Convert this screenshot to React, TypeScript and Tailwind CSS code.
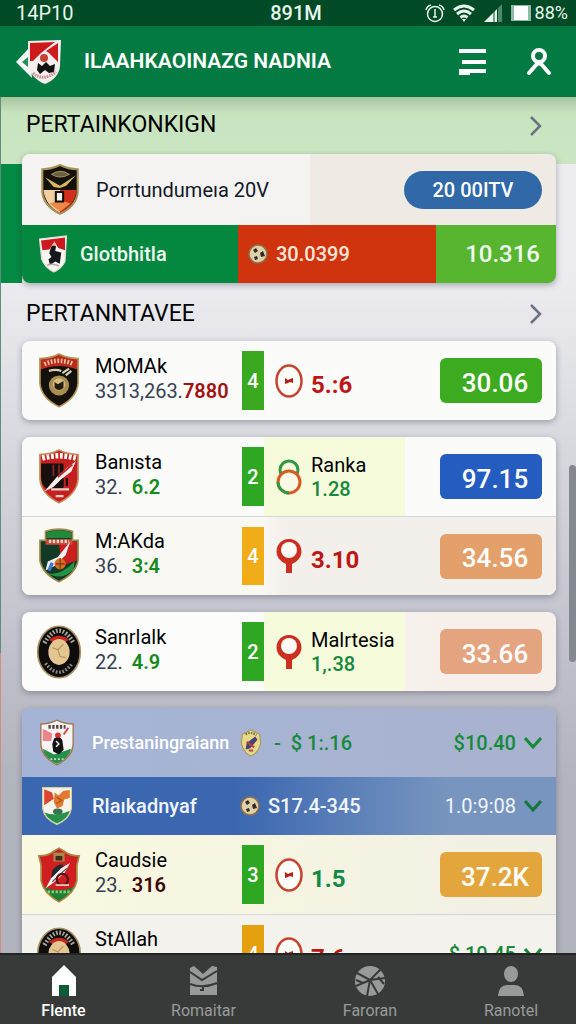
import type { ReactNode } from "react"
import clsx from "clsx"

type CrestKind =
    | "gold"
    | "kick"
    | "black"
    | "red"
    | "green"
    | "round"
    | "white"
    | "flag"
    | "crimson"

const SHIELD = "M3 5Q12 5 20 1Q28 5 37 5V27Q36 40 20 48Q4 40 3 27Z"

function Crest({ kind, className }: { kind: CrestKind; className?: string }) {
    return (
        <svg viewBox="0 0 40 50" className={clsx("shrink-0", className)} aria-hidden="true">
            {kind === "gold" && (
                <>
                    <path d={SHIELD} fill="#15110d" />
                    <path d="M4 25H20V47Q6 40 4 25Z" fill="#f3cfa0" />
                    <path d="M20 25H36Q35 39 20 47Z" fill="#cf2f1c" />
                    <path d="M10 38Q20 33 30 38L20 46Z" fill="#ef8a46" />
                    <path d="M16 27H23V36H16Z" fill="#f6f2ea" stroke="#15110d" strokeWidth="2" />
                    <path d="M12 10Q20 4 29 10Q20 15 12 10Z" fill="#6d6040" stroke="#a08f5c" strokeWidth="1" />
                    <path d="M6 13L20 21L35 11L26 21L20 23L14 22Z" fill="#d5b763" />
                    <path d={SHIELD} fill="none" stroke="#a8935a" strokeWidth="2" />
                </>
            )}
            {kind === "kick" && (
                <>
                    <path d="M2 5L38 1L36 35Q31 45 21 49Q9 43 5 32Z" fill="#f7f4f2" />
                    <path d="M4 7L36 3V20L27 17L22 9L15 19L6 20Z" fill="#cb1a1d" />
                    <path d="M17 17Q21 9 24 15L23 21L31 23L29 38L23 35L16 40L14 32L18 29L15 24Z" fill="#17181a" />
                    <path d="M18 14L22 8L25 14Z" fill="#f3b8a8" />
                    <path d="M12 40Q20 37 28 41" stroke="#b7a9a6" strokeWidth="2" fill="none" />
                    <path d="M2 5L38 1L36 35Q31 45 21 49Q9 43 5 32Z" fill="none" stroke="#e4ded6" strokeWidth="1.5" />
                </>
            )}
            {kind === "black" && (
                <>
                    <path d={SHIELD} fill="#14100d" />
                    <path d="M3 5Q12 5 20 1Q28 5 37 5V15Q20 8 3 15Z" fill="#bb2b1d" />
                    <path d="M7 10Q20 4 33 10" stroke="#e7c5a0" strokeWidth="4" strokeDasharray="1.5 1.5" fill="none" />
                    <path d="M11 16Q17 14 22 16M23 18L29 14M26 20L31 16" stroke="#d9cfae" strokeWidth="2" fill="none" />
                    <circle cx="20" cy="29" r="9" fill="#a88d4f" />
                    <circle cx="20" cy="28" r="5.5" fill="#d4bd7f" />
                    <path d="M16 26L19 28L24 25V31Q20 35 16 31Z" fill="#241b12" />
                    <path d={SHIELD} fill="none" stroke="#b39452" strokeWidth="1.5" />
                </>
            )}
            {kind === "red" && (
                <>
                    <path d={SHIELD} fill="#c4201f" />
                    <path d="M4 13H24V35H9Q4 33 4 24Z" fill="#17100f" />
                    <path d="M5 8Q20 4 35 8" stroke="#fff" strokeWidth="5" strokeDasharray="2.5 1.5" fill="none" />
                    <path d="M15 14V24M20 14V22" stroke="#8b2a26" strokeWidth="1.5" />
                    <path d="M7 38L18 25L27 17L35 11L31 20L22 27L15 34Z" fill="#f8efee" />
                    <path d="M19 25L32 14" stroke="#c4201f" strokeWidth="1.5" />
                    <path d="M13 36H29M17 42H24" stroke="#eacdc9" strokeWidth="2" />
                    <path d="M23 27V33M27 26V33" stroke="#17100f" strokeWidth="2" />
                    <path d={SHIELD} fill="none" stroke="#c78a5a" strokeWidth="1.5" />
                </>
            )}
            {kind === "green" && (
                <>
                    <path d="M8 3Q20 -1 32 3V11H37V29Q35 41 20 48Q5 41 3 29V11H8Z" fill="#123a24" />
                    <path d="M20 12H36V29L22 34Z" fill="#c9201f" />
                    <path d="M9 4Q20 0 31 4V9H9Z" fill="#23893a" />
                    <path d="M8 10H32V15H8Z" fill="#cf4a38" />
                    <path d="M11 12H29" stroke="#f0ddcf" strokeWidth="3" strokeDasharray="2 1.5" />
                    <path d="M30 12L19 26L10 30L8 38L16 34L26 24Z" fill="#eef0f3" />
                    <path d="M14 31L11 38" stroke="#4a74c9" strokeWidth="3" />
                    <circle cx="21" cy="32" r="5" fill="#d56d25" />
                    <path d="M17 32H25M21 27V37" stroke="#7b3410" strokeWidth="1" />
                    <path d="M9 40Q20 44 34 30L33 37Q22 48 9 40Z" fill="#239447" />
                    <path d="M8 3Q20 -1 32 3V11H37V29Q35 41 20 48Q5 41 3 29V11H8Z" fill="none" stroke="#a08b4d" strokeWidth="1.5" />
                </>
            )}
            {kind === "round" && (
                <>
                    <ellipse cx="20" cy="25" rx="19" ry="23" fill="#0e0d0c" stroke="#a5915d" strokeWidth="1.5" />
                    <path d="M7 17Q20 -5 33 17" stroke="#a9a79f" strokeWidth="4" strokeDasharray="1.5 1.5" fill="none" />
                    <path d="M8 35Q20 51 32 35" stroke="#8e8c84" strokeWidth="3" strokeDasharray="1.5 1.5" fill="none" />
                    <path d="M11 14Q20 7 29 14L26 16H14Z" fill="#c4281d" />
                    <ellipse cx="20" cy="25" rx="9.5" ry="11.5" fill="#e3c691" />
                    <path d="M14 21L19 23L24 18M19 23L21 29L26 30" stroke="#b8945a" strokeWidth="1" fill="none" />
                </>
            )}
            {kind === "white" && (
                <>
                    <path d={SHIELD} fill="#f7f6f3" />
                    <path d="M5 10L15 15L14 23H5Z" fill="#ec8590" />
                    <path d="M5 31L17 37L35 31Q33 41 20 47Q6 41 5 31Z" fill="#24904a" />
                    <path d="M11 8H29" stroke="#5b4545" strokeWidth="4" strokeDasharray="2.5 1.5" />
                    <path d="M32 9L27 16" stroke="#d5434a" strokeWidth="2" />
                    <circle cx="21" cy="17" r="3" fill="#d7332f" />
                    <path d="M17 20Q26 17 26 25L27 32L22 37L16 34L15 26Z" fill="#141414" />
                    <path d="M19 23L22 26L19 29" stroke="#fff" strokeWidth="1.5" fill="none" />
                    <path d="M13 42H27" stroke="#b9dfc3" strokeWidth="2" strokeDasharray="2 2" />
                    <path d={SHIELD} fill="none" stroke="#a07a55" strokeWidth="1.5" />
                </>
            )}
            {kind === "flag" && (
                <>
                    <path d="M2 2H38V28Q36 41 20 48Q4 41 2 28Z" fill="#f7f4ec" />
                    <path d="M4 4L14 8L16 16L4 24Z" fill="#dc4630" />
                    <path d="M36 5L28 6L22 12L17 8L16 20L20 28L27 25L29 17L36 15Z" fill="#e3792f" />
                    <path d="M20 14L26 18L19 22" stroke="#a9501c" strokeWidth="1.5" fill="none" />
                    <ellipse cx="21" cy="32" rx="6" ry="4" fill="#3b7150" />
                    <path d="M4 33Q20 39 36 31Q34 41 20 47Q7 41 4 33Z" fill="#27914a" />
                    <path d="M2 2H38V28Q36 41 20 48Q4 41 2 28Z" fill="none" stroke="#d8cf9e" strokeWidth="1.5" />
                </>
            )}
            {kind === "crimson" && (
                <>
                    <path d="M2 8Q10 8 15 4L20 1L25 4Q30 8 38 8L36 16V30Q34 41 20 49Q6 41 4 30V16Z" fill="#d01f20" />
                    <path d="M6 35Q20 42 34 35Q31 43 20 48Q9 43 6 35Z" fill="#1e7e32" />
                    <path d="M10 40H30" stroke="#8fd07f" strokeWidth="2.5" strokeDasharray="2 1.5" />
                    <path d="M15 5H25V13H15Z" fill="#a8884b" />
                    <path d="M17 8H23V12H17Z" fill="#4b261a" />
                    <path d="M14 21Q19 14 24 16L18 29L12 33Z" fill="#24282f" />
                    <path d="M30 14L25 23L15 32L8 37L13 28L22 19Z" fill="#f4f2f2" />
                    <path d="M14 31L27 19" stroke="#555a64" strokeWidth="1" />
                    <circle cx="23" cy="29" r="5" fill="none" stroke="#5a1415" strokeWidth="2" />
                    <path d="M17 34H29" stroke="#f1d3d0" strokeWidth="1.5" />
                    <path d="M2 8Q10 8 15 4L20 1L25 4Q30 8 38 8L36 16V30Q34 41 20 49Q6 41 4 30V16Z" fill="none" stroke="#a98946" strokeWidth="1.5" />
                </>
            )}
        </svg>
    )
}

function Ball() {
    return (
        <svg viewBox="0 0 20 20" className="h-5 w-5 shrink-0" aria-hidden="true">
            <circle cx="10" cy="10" r="9" fill="#dfd0a9" stroke="#8b7048" strokeWidth="1.5" />
            <path d="M5 6L8 4L10 7L7 9Z M12 9L15 7L17 12L13 13Z M6 13L9 12L10 15L7 16Z" fill="#332c22" />
        </svg>
    )
}

function MiniBadge() {
    return (
        <svg viewBox="0 0 20 26" className="h-[28px] w-[22px] shrink-0" aria-hidden="true">
            <path d="M10 1L18 5L19 13Q17 22 10 25Q3 22 1 13L2 5Z" fill="#e5d98c" stroke="#a8974f" strokeWidth="1" />
            <path d="M5 5Q10 2 15 6" stroke="#7d6d42" strokeWidth="2" strokeDasharray="1.5 1" fill="none" />
            <path d="M14 7L16 10L9 18L5 19L6 13Z" fill="#4a3f76" />
            <path d="M6 12L13 17M8 20H12" stroke="#b5443a" strokeWidth="2" />
        </svg>
    )
}

function DownArrow({ className }: { className?: string }) {
    return (
        <svg viewBox="0 0 18 14" className={clsx("h-[14px] w-[18px]", className)} aria-hidden="true">
            <path d="M1 2L9 11L17 2" fill="none" stroke="currentColor" strokeWidth="3" />
        </svg>
    )
}

type MarkKind = "ring" | "rings" | "pin"

function Mark({ kind }: { kind: MarkKind }) {
    return (
        <svg viewBox="0 0 28 36" className="h-9 w-7 shrink-0" aria-hidden="true">
            {kind === "ring" && (
                <>
                    <ellipse cx="14" cy="18" rx="12.5" ry="15.5" fill="#fffdf8" stroke="#c5432f" strokeWidth="2.5" />
                    <path d="M10 15L13 17L15 16L18 15V20L15 19L13 20L10 21Z" fill="#b3201a" />
                </>
            )}
            {kind === "rings" && (
                <>
                    <circle cx="14" cy="11" r="9" fill="none" stroke="#2f9a41" strokeWidth="3" />
                    <circle cx="14" cy="23" r="11" fill="#fbf8e6" stroke="#d65b22" strokeWidth="3" />
                    <path d="M3 23A11 11 0 0 0 14 34" fill="none" stroke="#2f9a41" strokeWidth="3" />
                </>
            )}
            {kind === "pin" && (
                <>
                    <path d="M14 1A12 13 0 0 1 26.500 14Q26 22 17 26V35H11V26Q2 22 1.500 14A12 13 0 0 1 14 1Z" fill="#cb2f20" />
                    <circle cx="14" cy="12" r="8" fill="#fdf9f4" />
                </>
            )}
        </svg>
    )
}

interface TeamRowProps {
    crest: CrestKind
    name: string
    prefix: string
    score: string
    scoreClass: string
    rank: string
    rankClass: string
    mark: MarkKind
    rival?: string
    value: string
    valueClass?: string
    odds: string
    oddsClass?: string
    className?: string
}

function TeamRow({
    crest,
    name,
    prefix,
    score,
    scoreClass,
    rank,
    rankClass,
    mark,
    rival,
    value,
    valueClass,
    odds,
    oddsClass,
    className
}: TeamRowProps) {
    return (
        <div
            className={clsx(
                "grid min-h-[79px] grid-cols-[73px_minmax(0,147fr)_22px_minmax(0,141fr)_minmax(0,151fr)] items-stretch",
                className
            )}
        >
            <div className="flex items-center justify-center">
                <Crest kind={crest} className="h-14 w-12" />
            </div>
            <div className="flex flex-col justify-center pb-1 text-xl leading-[25px] whitespace-nowrap">
                <p className="text-black">{name}</p>
                <p className="text-gray-700">
                    {prefix}
                    <span className={clsx("font-semibold", scoreClass)}>{score}</span>
                </p>
            </div>
            <div className={clsx("my-[10px] flex items-center justify-center text-xl font-medium text-white", rankClass)}>
                {rank}
            </div>
            <div className={clsx("flex items-center gap-2 pl-[11px] whitespace-nowrap", rival && "bg-[#f6fbdc]")}>
                <Mark kind={mark} />
                {rival ? (
                    <div className="text-xl leading-6">
                        <p className="text-black">{rival}</p>
                        <p className="font-medium text-[#168a3c]">{value}</p>
                    </div>
                ) : (
                    <p className={clsx("pt-2 text-2xl font-bold", valueClass)}>{value}</p>
                )}
            </div>
            <div className="flex items-center justify-end pr-[14px]">
                {oddsClass ? (
                    <button
                        type="button"
                        className={clsx("h-[45px] w-[102px] rounded-md pt-1 pl-2 text-[26px] leading-none font-medium text-white", oddsClass)}
                    >
                        {odds}
                    </button>
                ) : (
                    <button type="button" className="flex items-center gap-2 text-xl font-medium text-[#168a3c]">
                        {odds}
                        <DownArrow />
                    </button>
                )}
            </div>
        </div>
    )
}

function Card({ children, className }: { children: ReactNode; className?: string }) {
    return (
        <div className={clsx("overflow-hidden rounded-lg shadow-[0_2px_6px_rgba(60,60,80,0.4)]", className)}>
            {children}
        </div>
    )
}

function SectionTitle({ children, className }: { children: string; className?: string }) {
    return (
        <a href="#" className={clsx("flex items-center justify-between pr-[14px] pl-1 text-[23px] text-black", className)}>
            <h2>{children}</h2>
            <svg viewBox="0 0 14 20" className="h-5 w-[14px] text-gray-500" aria-hidden="true">
                <path d="M3 1L12 10L3 19" fill="none" stroke="currentColor" strokeWidth="2.5" />
            </svg>
        </a>
    )
}

function StatusBar() {
    return (
        <div className="grid h-[26px] shrink-0 grid-cols-3 items-center bg-[#004a26] pr-2 pl-4 text-xl leading-none text-[#e8f6ec]">
            <span>14P10</span>
            <span className="pl-2 text-center font-medium">891M</span>
            <span className="flex items-center justify-end gap-2">
                <svg viewBox="0 0 20 20" className="h-5 w-5" fill="none" stroke="currentColor" strokeWidth="1.5" aria-hidden="true">
                    <circle cx="10" cy="11" r="7.5" />
                    <path d="M10 6V14M8 14H12M1 7Q2 3 6 2M19 7Q18 3 14 2" />
                </svg>
                <svg viewBox="0 0 22 18" className="h-[18px] w-[22px]" fill="none" stroke="currentColor" strokeWidth="3" aria-hidden="true">
                    <path d="M1 6Q11 -2 21 6M4 10Q11 4 18 10M7.500 13.500Q11 10.500 14.500 13.500" />
                    <path d="M9 15H13L11 18Z" fill="currentColor" stroke="none" />
                </svg>
                <svg viewBox="0 0 20 18" className="h-[18px] w-5" aria-hidden="true">
                    <path d="M1 18L14 5V18Z" fill="currentColor" />
                    <path d="M15 4L19 0V18H15Z" fill="#4d8a69" />
                    <path d="M11 7V18" stroke="#004a26" />
                </svg>
                <svg viewBox="0 0 20 18" className="h-[18px] w-5" aria-hidden="true">
                    <path d="M0 1H20V17H0Z" fill="#93b8a4" />
                    <path d="M3 2H17V16H3Z" fill="#fff" />
                </svg>
                <span className="-ml-1 text-lg leading-none">88%</span>
            </span>
        </div>
    )
}

function Header() {
    return (
        <header className="flex h-[71px] shrink-0 items-center bg-[#037a41] pr-6 pl-4 text-white">
            <button type="button" aria-label="Back" className="mr-5">
                <svg viewBox="0 0 48 46" className="h-12 w-12" aria-hidden="true">
                    <path d="M0 23L13 9L16 39Z" fill="#f3faf6" />
                    <path d="M6 23L12 18V28Z" fill="#2a8c5c" />
                    <path d="M12 2L45 1L44 27Q43 39 29 45Q14 39 12 25Z" fill="#f5eeee" />
                    <path d="M14 4L39 3L25 14L17 22L14 22Z" fill="#cc1b1d" />
                    <path d="M42 4V23L33 14L30 12Z" fill="#cc1b1d" />
                    <circle cx="28" cy="19" r="4" fill="#c24238" />
                    <path d="M22 24L26 27L30 23L34 27L39 25L38 33L33 34L29 31L24 35L21 31Z" fill="#111" />
                    <path d="M17 34Q27 43 40 33" stroke="#c98787" strokeWidth="3" strokeDasharray="1.5 1" fill="none" />
                </svg>
            </button>
            <h1 className="min-w-0 flex-1 truncate text-[21px] font-semibold">ILAAHKAOINAZG NADNIA</h1>
            <button type="button" aria-label="Menu" className="mr-10">
                <svg viewBox="0 0 28 26" className="h-[26px] w-7" stroke="currentColor" strokeWidth="4" aria-hidden="true">
                    <path d="M1 2H28M4 13H28M1 22H28" />
                    <path d="M1 24H12" />
                </svg>
            </button>
            <button type="button" aria-label="Profile">
                <svg viewBox="0 0 26 28" className="h-7 w-[26px]" fill="none" stroke="currentColor" strokeWidth="4" strokeLinecap="round" aria-hidden="true">
                    <circle cx="13" cy="8" r="6" />
                    <path d="M3 25L10 17Q13 14 16 17L23 25" />
                </svg>
            </button>
        </header>
    )
}

function NavItem({ label, active, children }: { label: string; active?: boolean; children: ReactNode }) {
    return (
        <a
            href="#"
            className={clsx(
                "flex flex-col items-center gap-[2px] text-base leading-6",
                active ? "font-medium text-white" : "text-[#989a99]"
            )}
        >
            <svg viewBox="0 0 32 32" className="h-8 w-8" aria-hidden="true">
                {children}
            </svg>
            {label}
        </a>
    )
}

function BottomNav() {
    return (
        <nav className="grid h-[71px] shrink-0 grid-cols-[127fr_153fr_180fr_102fr] border-t-2 border-[#232525] bg-[#383a3a] pt-[10px] pr-[14px]">
            <NavItem label="Flente" active>
                <path d="M16 0L28 12V31H4V12Z" fill="currentColor" />
                <path d="M11 20H21V31H11Z" fill="#0f5a37" />
            </NavItem>
            <NavItem label="Romaitar">
                <path d="M2 3L6 1L15 9L24 1L29 2V30H2Z" fill="currentColor" />
                <path d="M2 7L14 15L29 6M2 19Q15 24 29 18M15 21V25H12" stroke="#383a3a" strokeWidth="2" fill="none" />
            </NavItem>
            <NavItem label="Faroran">
                <circle cx="16" cy="16" r="15" fill="currentColor" />
                <path d="M3 8L16 15L27 4M31 13L16 15L2 21M16 15L13 31M16 15L24 29M2 15L9 18M24 12L30 19" stroke="#383a3a" strokeWidth="2" fill="none" />
            </NavItem>
            <NavItem label="Ranotel">
                <ellipse cx="16" cy="9" rx="7" ry="8" fill="currentColor" />
                <path d="M3 31Q4 20 12 20H20Q28 20 29 31Z" fill="currentColor" />
            </NavItem>
        </nav>
    )
}

export default function App() {
    return (
        <div className="flex h-screen flex-col overflow-hidden font-['Roboto','Liberation_Sans',sans-serif]">
            <StatusBar />
            <Header />
            <main className="relative min-h-0 flex-1 overflow-hidden bg-linear-to-b from-[#ededf1] from-20% to-[#b1b3bd] to-80%">
                {/* Featured */}
                <section className="bg-[linear-gradient(#a9c5a0,#c8e4bf_16px,#cbe6c2_67px,transparent_67px),linear-gradient(90deg,#028942_22px,transparent_22px)] pr-5 pl-[22px]">
                    <SectionTitle className="h-[57px]">PERTAINKONKIGN</SectionTitle>
                    <Card>
                        <div className="flex h-[71px] items-center bg-linear-to-r from-[#f5f3f1] from-54% to-[#efebe4] to-54% pr-[14px] pl-4">
                            <Crest kind="gold" className="h-[52px] w-11" />
                            <h3 className="ml-[14px] flex-1 text-xl text-gray-900">Porrtundumeıa 20V</h3>
                            <button
                                type="button"
                                className="h-[38px] w-[138px] rounded-full bg-[#3068a8] text-xl font-medium text-white"
                            >
                                20 00ITV
                            </button>
                        </div>
                        <div className="grid h-[58px] grid-cols-[216fr_198fr_120fr] text-xl font-medium text-[#eefaf0]">
                            <div className="flex items-center gap-3 bg-[#04873f] pl-4">
                                <Crest kind="kick" className="h-10 w-[30px]" />
                                Glotbhitla
                            </div>
                            <div className="flex items-center gap-2 bg-[#d0340f] pl-[10px] text-[#fbe6d8]">
                                <Ball />
                                30.0399
                            </div>
                            <div className="flex items-center justify-end bg-[#57b530] pr-4 text-2xl">10.316</div>
                        </div>
                    </Card>
                </section>

                <section className="flex flex-col pr-5 pl-[22px]">
                    <SectionTitle className="h-[58px] pt-1">PERTANNTAVEE</SectionTitle>
                    <div className="flex flex-col gap-[17px]">
                        <Card className="bg-[#fbfbfa]">
                            <TeamRow
                                crest="black"
                                name="MOMAk"
                                prefix="3313,263."
                                score="7880"
                                scoreClass="text-[#a31212]"
                                rank="4"
                                rankClass="bg-[#3aa91f]"
                                mark="ring"
                                value="5.:6"
                                valueClass="text-[#bd1715]"
                                odds="30.06"
                                oddsClass="bg-[#3dab20]"
                            />
                        </Card>
                        <Card className="bg-[#fbfbfa]">
                            <TeamRow
                                crest="red"
                                name="Banısta"
                                prefix="32.  "
                                score="6.2"
                                scoreClass="ml-1 text-[#168a1c]"
                                rank="2"
                                rankClass="bg-[#2ea822]"
                                mark="rings"
                                rival="Ranka"
                                value="1.28"
                                odds="97.15"
                                oddsClass="bg-[#245cc0]"
                            />
                            <TeamRow
                                crest="green"
                                name="M:AKda"
                                prefix="36. "
                                score="3:4"
                                scoreClass="ml-1 text-[#168a1c]"
                                rank="4"
                                rankClass="bg-[#f0ad18]"
                                mark="pin"
                                value="3.10"
                                valueClass="text-[#bd1715]"
                                odds="34.56"
                                oddsClass="bg-[#e3a06b]"
                                className="border-t border-gray-300 bg-linear-to-r from-[#f9f8f3] from-45% to-[#f3efea] to-50%"
                            />
                        </Card>
                        <Card className="bg-linear-to-r from-[#fcfcfb] from-40% to-[#f6efea] to-80%">
                            <TeamRow
                                crest="round"
                                name="Sanrlalk"
                                prefix="22. "
                                score="4.9"
                                scoreClass="ml-1 text-[#168a1c]"
                                rank="2"
                                rankClass="bg-[#2ea822]"
                                mark="pin"
                                rival="Malrtesia"
                                value="1,.38"
                                odds="33.66"
                                oddsClass="bg-[#e4a480]"
                            />
                        </Card>
                        <Card>
                            <div className="flex h-[69px] items-center bg-linear-to-r from-[#a5b4d6] to-[#a9b3cf] pr-[14px] pl-4 text-xl font-medium whitespace-nowrap text-[#168a3c]">
                                <Crest kind="white" className="h-12 w-[38px]" />
                                <span className="ml-4 w-[138px] text-lg text-white">Prestaningraiann</span>
                                <span className="ml-[10px] flex flex-1 items-center gap-3">
                                    <MiniBadge />
                                    <span>- &nbsp;$ 1:.16</span>
                                </span>
                                <button type="button" className="flex items-center gap-2">
                                    $10.40
                                    <DownArrow />
                                </button>
                            </div>
                            <div className="flex h-[58px] items-center bg-linear-to-r from-[#3b67b0] from-40% to-[#7895bf] to-80% pr-[14px] pl-4 text-xl font-medium whitespace-nowrap text-[#f1f5fb]">
                                <Crest kind="flag" className="h-10 w-[38px]" />
                                <span className="ml-4 w-[138px]">Rlaıkadnyaf</span>
                                <span className="ml-[10px] flex flex-1 items-center gap-2">
                                    <Ball />
                                    S17.4-345
                                </span>
                                <button type="button" className="flex items-center gap-2 font-normal">
                                    1.0:9:08
                                    <DownArrow className="text-[#14783e]" />
                                </button>
                            </div>
                            <TeamRow
                                crest="crimson"
                                name="Caudsie"
                                prefix="23. "
                                score="316"
                                scoreClass="ml-1 text-[#3d0808]"
                                rank="3"
                                rankClass="bg-[#2ea822]"
                                mark="ring"
                                value="1.5"
                                valueClass="text-[#108a45]"
                                odds="37.2K"
                                oddsClass="bg-[#e3a63d]"
                                className="bg-linear-to-r from-[#f9fae0] to-[#f2efe4]"
                            />
                            <TeamRow
                                crest="round"
                                name="StAllah"
                                prefix="22. "
                                score="618"
                                scoreClass="ml-1 text-[#168a1c]"
                                rank="4"
                                rankClass="bg-[#e5a010]"
                                mark="ring"
                                value="7.6"
                                valueClass="text-[#bd1715]"
                                odds="$ 10.45"
                                className="border-t border-gray-300 bg-[#f4f2ec]"
                            />
                        </Card>
                    </div>
                </section>

                {/* Edge line and scroll thumb */}
                <div className="absolute inset-y-0 left-0 w-px bg-linear-to-b from-[#5f8f7c] from-65% to-[#d38c80] to-65%" />
                <div className="absolute top-[43%] right-0 h-[23%] w-[7px] rounded-full bg-[#85888f]" />
            </main>
            <BottomNav />
        </div>
    )
}
